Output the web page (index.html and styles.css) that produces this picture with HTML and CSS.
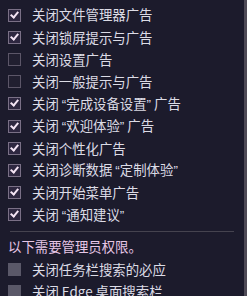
FILE: index.html
```html
<!DOCTYPE html>
<html lang="zh-CN">
<head>
<meta charset="utf-8">
<link rel="stylesheet" href="styles.css">
</head>
<body>
<div class="frame">
  <div class="panel">
    <ul class="list">
      <li class="row"><span class="box on"></span><span class="label">关闭文件管理器广告</span></li>
      <li class="row"><span class="box on"></span><span class="label">关闭锁屏提示与广告</span></li>
      <li class="row"><span class="box"></span><span class="label">关闭设置广告</span></li>
      <li class="row"><span class="box"></span><span class="label">关闭一般提示与广告</span></li>
      <li class="row"><span class="box on"></span><span class="label">关闭 <span class="q">“</span>完成设备设置<span class="q">”</span> 广告</span></li>
      <li class="row"><span class="box on"></span><span class="label">关闭 <span class="q">“</span>欢迎体验<span class="q">”</span> 广告</span></li>
      <li class="row"><span class="box on"></span><span class="label">关闭个性化广告</span></li>
      <li class="row"><span class="box on"></span><span class="label">关闭诊断数据 <span class="q">“</span>定制体验<span class="q">”</span></span></li>
      <li class="row"><span class="box on"></span><span class="label">关闭开始菜单广告</span></li>
      <li class="row"><span class="box on"></span><span class="label">关闭 <span class="q">“</span>通知建议<span class="q">”</span></span></li>
    </ul>
    <div class="sep"></div>
    <div class="note">以下需要管理员权限。</div>
    <ul class="list admin">
      <li class="row"><span class="box dis"></span><span class="label">关闭任务栏搜索的必应</span></li>
      <li class="row"><span class="box dis"></span><span class="label">关闭 Edge 桌面搜索栏</span></li>
    </ul>
  </div>
  <div class="scroll"></div>
</div>
</body>
</html>
```

FILE: styles.css
```css
html, body {
  margin: 0;
  padding: 0;
  background: #1c1b2c;
  overflow: hidden;
}
body {
  width: 247px;
  height: 296px;
  font-family: "Noto Sans CJK SC", "Noto Sans", sans-serif;
  font-size: 13.4px;
  color: #dcdce6;
}
.frame {
  display: flex;
  height: 296px;
}
.panel {
  flex: 1;
  padding: 4px 0 0 8px;
}
.scroll {
  width: 3px;
  background: #4e4a56;
}
.list {
  list-style: none;
  margin: 0;
  padding: 0;
}
.row {
  display: flex;
  align-items: center;
  height: 22.2px;
  white-space: nowrap;
}
.box {
  box-sizing: border-box;
  width: 13px;
  height: 13px;
  border: 1.5px solid #5c5668;
  background: #211f30;
  margin-right: 11px;
  flex: none;
  position: relative;
}
.box.on {
  border-color: #7a7086;
  background: #2e2740;
}
.box.on::after {
  content: "";
  position: absolute;
  left: 3px;
  top: 0px;
  width: 3px;
  height: 6px;
  border-right: 2px solid #f4e4f4;
  border-bottom: 2px solid #f4e4f4;
  transform: rotate(40deg);
}
.box.dis {
  border: none;
  background: #5a5868;
}
.label {
  line-height: 1;
}
.q {
  font-family: "Liberation Sans", sans-serif;
}
.sep {
  height: 1px;
  background: #45434f;
  margin: 5px 10px 0 2px;
}
.note {
  color: #e6c6e6;
  height: 22px;
  line-height: 22px;
  margin: 3px 0 2px 0;
  white-space: nowrap;
}
.admin .row {
  height: 22px;
}
```
